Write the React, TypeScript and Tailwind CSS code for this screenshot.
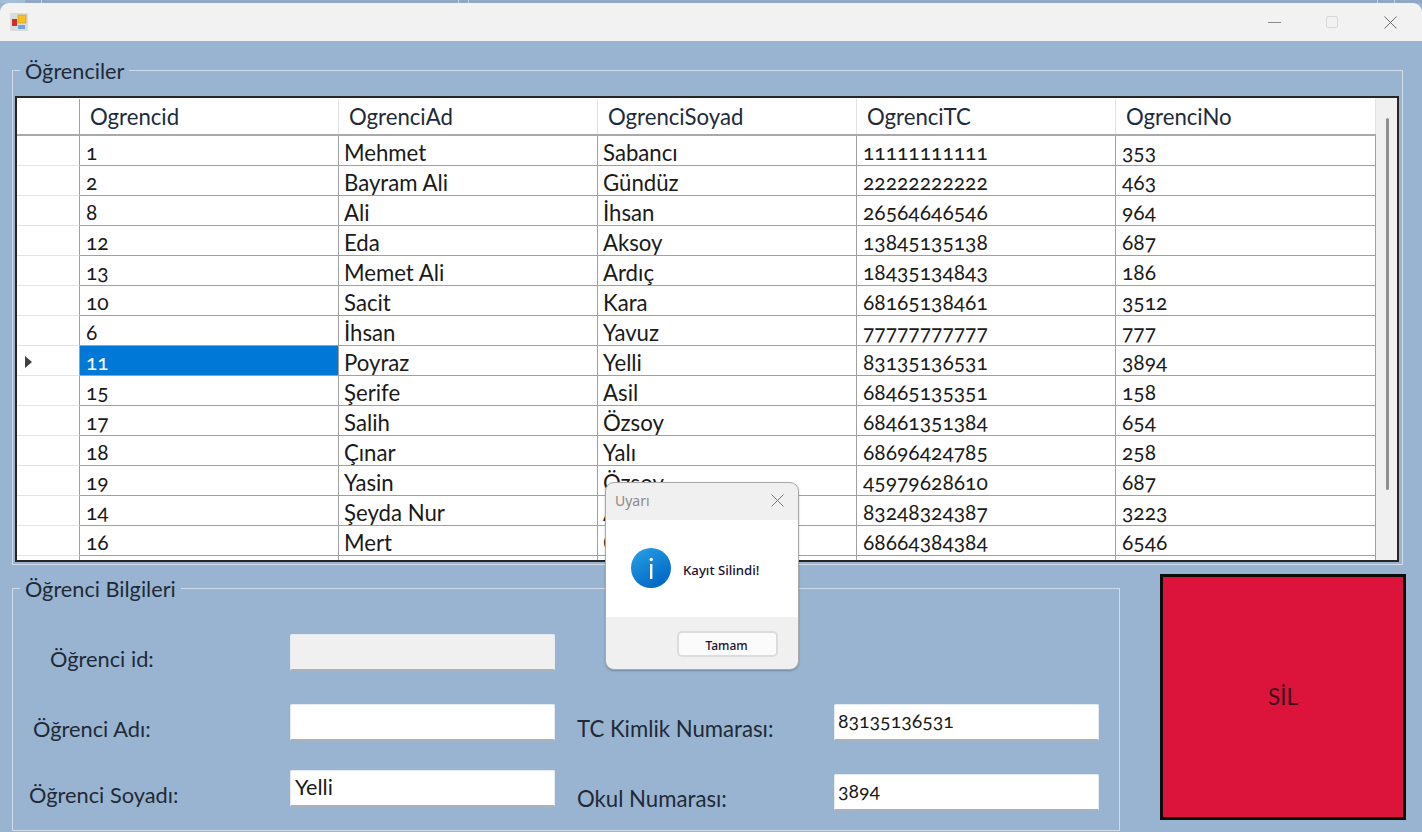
const rows: string[][] = [
  ["1", "Mehmet", "Sabancı", "11111111111", "353"],
  ["2", "Bayram Ali", "Gündüz", "22222222222", "463"],
  ["8", "Ali", "İhsan", "26564646546", "964"],
  ["12", "Eda", "Aksoy", "13845135138", "687"],
  ["13", "Memet Ali", "Ardıç", "18435134843", "186"],
  ["10", "Sacit", "Kara", "68165138461", "3512"],
  ["6", "İhsan", "Yavuz", "77777777777", "777"],
  ["11", "Poyraz", "Yelli", "83135136531", "3894"],
  ["15", "Şerife", "Asil", "68465135351", "158"],
  ["17", "Salih", "Özsoy", "68461351384", "654"],
  ["18", "Çınar", "Yalı", "68696424785", "258"],
  ["19", "Yasin", "Özsoy", "45979628610", "687"],
  ["14", "Şeyda Nur", "Aksu", "83248324387", "3223"],
  ["16", "Mert", "Özen", "68664384384", "6546"],
];
const headers = ["Ogrencid", "OgrenciAd", "OgrenciSoyad", "OgrenciTC", "OgrenciNo"];
const widths = ["w-[259px]", "w-[259px]", "w-[259px]", "w-[259px]", "w-[260px]"];

function Grid() {
  return (
    <div className="mx-[2px] mt-[13px] h-[466px] w-[1384px] border-2 border-[#262626] bg-[#f0f0f0] flex overflow-hidden">
      <div className="w-[1359px] shrink-0 bg-white pt-px">
        <div className="flex h-[37px] bg-white border-b-2 border-[#a9a9a9]">
          <div className="w-[63px] shrink-0 border-r border-[#a0a0a0]" />
          {headers.map((h, i) => (
            <div key={h} className={`${widths[i]} shrink-0 border-r border-[#e3e3e3] pl-[10px] flex items-center text-[#1d2b3a] text-[22.2px]`}>
              {h}
            </div>
          ))}
        </div>
        {rows.map((r, idx) => (
          <div key={r[0]} className="flex h-[30px] bg-white">
            <div className="w-[63px] shrink-0 border-r border-[#a0a0a0] border-b border-b-[#e3e3e3] flex items-center pl-[8px] pt-[3px]">
              {r[0] === "11" && (
                <svg width="7" height="12" viewBox="0 0 7 12">
                  <path d="M0 0 L7 6 L0 12 Z" fill="#404040" />
                </svg>
              )}
            </div>
            {r.map((c, i) => {
              const sel = idx === 7 && i === 0;
              const text = i === 1 || i === 2;
              return (
                <div
                  key={i}
                  className={`${widths[i]} ${text ? "text-[22.2px] pt-[5px] pl-[5px]" : "text-[21px] pt-px pl-[6px]"} shrink-0 border-r border-b border-[#a0a0a0] flex items-center leading-none oldstyle-nums ${sel ? "bg-[#0078d7] text-white" : "text-[#1a1a1a]"}`}
                >
                  {c}
                </div>
              );
            })}
          </div>
        ))}
        <div className="flex h-[7px] bg-white">
          <div className="w-[63px] shrink-0 border-r border-[#a0a0a0]" />
          {widths.map((w, i) => (
            <div key={i} className={`${w} shrink-0 border-r border-[#a0a0a0]`} />
          ))}
        </div>
      </div>
      <div className="flex-1 flex justify-center pt-[20px] pl-px">
        <div className="w-[3px] h-[372px] bg-[#8f8f8f] rounded-full" />
      </div>
    </div>
  );
}

function Box({ className, value, digits }: { className?: string; value?: string; digits?: boolean }) {
  return (
    <div className={`w-[265px] h-[37px] border border-[#e4ebf2] border-b-2 border-b-[#a9b3bd] rounded-[2px] pt-px leading-[30px] text-[#1a1a1a] oldstyle-nums ${digits ? "text-[19.5px] pl-[3px]" : "text-[21.6px] pl-[4px]"} ${className ?? "bg-white"}`}>
      {value}
    </div>
  );
}

function Dialog() {
  return (
    <div className="absolute left-[605px] top-[482px] w-[194px] h-[188px] rounded-[9px] border border-[#a8a8a8] bg-[#f0f0f0] overflow-hidden flex flex-col shadow-[0_1px_2px_rgba(0,0,0,0.25)] font-['Noto_Sans',sans-serif]">
      <div className="h-[37px] flex items-center justify-between pl-[9px] pr-[13px] pb-[2px] text-[14px] text-[#8a8a8a]">
        <span>Uyarı</span>
        <svg width="15" height="15" viewBox="0 0 15 15" stroke="#777" strokeWidth="1" fill="none">
          <path d="M1.5 1.5 L13.5 13.5 M13.5 1.5 L1.5 13.5" />
        </svg>
      </div>
      <div className="h-[97px] bg-white flex items-center pl-[25px] gap-[12px] pb-[2px]">
        <svg width="40" height="40" viewBox="0 0 40 40">
          <defs>
            <linearGradient id="info" x1="0" y1="0" x2="0.6" y2="1">
              <stop offset="0" stopColor="#2aa2e6" />
              <stop offset="1" stopColor="#0068c6" />
            </linearGradient>
          </defs>
          <circle cx="20" cy="20" r="20" fill="url(#info)" />
          <rect x="19" y="16" width="2.4" height="15" fill="#fff" />
          <circle cx="20.2" cy="11.5" r="1.7" fill="#fff" />
        </svg>
        <span className="text-[13.2px] font-medium text-[#1a1030] pt-[6px]">Kayıt Silindi!</span>
      </div>
      <div className="flex-1 flex justify-end items-start pt-[14px] pr-[20px]">
        <div className="w-[101px] h-[26px] bg-[#fbfbfb] border-2 border-[#dcdcdc] rounded-[5px] flex items-center justify-center pt-[3px] pr-[2px] text-[12px] font-medium text-[#1a1030]">
          Tamam
        </div>
      </div>
    </div>
  );
}

export default function App() {
  return (
    <div className="relative w-[1422px] h-[832px] overflow-hidden bg-[#99b4d1] font-['Lato',sans-serif] text-[#1f2a38]">
      <div className="h-[3px] bg-[#8fa9c4] flex">
        <div className="w-[25px] h-[3px] bg-[#a3bfd6]" />
        <div className="w-px h-[3px] bg-[#c4d2e0] ml-[16px]" />
        <div className="w-px h-[3px] bg-[#c4d2e0] ml-[416px]" />
        <div className="w-px h-[3px] bg-[#c4d2e0] ml-[9px]" />
        <div className="w-px h-[3px] bg-[#c4d2e0] ml-[908px]" />
        <div className="w-px h-[3px] bg-[#c4d2e0] ml-[16px]" />
      </div>
      <div className="h-[38px] bg-[#f2f2f2] rounded-t-[9px] flex items-center justify-between pl-[10px] pr-[25px]">
        <svg width="18" height="18" viewBox="0 0 18 18">
          <rect width="18" height="18" fill="#dcdcdc" />
          <rect x="8" y="2" width="8" height="8" fill="#f5bf26" stroke="#c99a10" strokeWidth="0.6" />
          <rect x="2" y="6" width="5" height="7" fill="#c9302c" />
          <rect x="8" y="12" width="7" height="4" fill="#6ea4e6" />
        </svg>
        <div className="flex items-center gap-[45px]">
          <div className="w-[13px] h-px bg-[#8a8a8a]" />
          <div className="w-[12px] h-[12px] border border-[#d8d8d8] rounded-[2px]" />
          <svg width="13" height="13" viewBox="0 0 13 13" stroke="#6a6a6a" strokeWidth="1" fill="none" className="ml-px">
            <path d="M0.5 0.5 L12.5 12.5 M12.5 0.5 L0.5 12.5" />
          </svg>
        </div>
      </div>

      <fieldset className="ml-[12px] mt-[16px] w-[1391px] h-[508px] border border-[#d0dce9]">
        <legend className="ml-[7px] px-[5px] text-[21.7px] leading-[26px] translate-y-px">Öğrenciler</legend>
        <Grid />
      </fieldset>

      <div className="flex items-start pl-[12px]">
        <fieldset className="mt-[10px] w-[1108px] h-[256px] border border-[#d0dce9] flex">
          <legend className="ml-[7px] px-[5px] text-[21.7px] leading-[26px] translate-y-px">Öğrenci Bilgileri</legend>
          <div className="flex">
            <div className="w-[277px] shrink-0 text-[21.8px]">
              <div className="h-[37px] mt-[33px] flex items-center pl-[37px] pt-[13px]">Öğrenci id:</div>
              <div className="h-[37px] mt-[33px] flex items-center pl-[20px] pt-[13px]">Öğrenci Adı:</div>
              <div className="h-[37px] mt-[29px] flex items-center pl-[16px] pt-[13px]">Öğrenci Soyadı:</div>
            </div>
            <div className="w-[265px] shrink-0">
              <Box className="mt-[33px] bg-[#f0f0f0]" />
              <Box className="mt-[33px] bg-white" />
              <Box className="mt-[29px] bg-white" value="Yelli" />
            </div>
            <div className="w-[279px] shrink-0 text-[22.2px] pl-[22px]">
              <div className="h-[37px] mt-[103px] flex items-center pt-[13px]">TC Kimlik Numarası:</div>
              <div className="h-[37px] mt-[33px] flex items-center pt-[13px]">Okul Numarası:</div>
            </div>
            <div className="w-[265px] shrink-0">
              <Box className="mt-[103px] bg-white" value="83135136531" digits />
              <Box className="mt-[33px] bg-white" value="3894" digits />
            </div>
          </div>
        </fieldset>
        <div className="ml-[40px] mt-[9px] w-[246px] h-[246px] bg-[#dc143c] border-[3px] border-[#0d0d0d] flex items-center justify-center text-[22.4px] text-[#3a0a18]">
          SİL
        </div>
      </div>

      <Dialog />
    </div>
  );
}
